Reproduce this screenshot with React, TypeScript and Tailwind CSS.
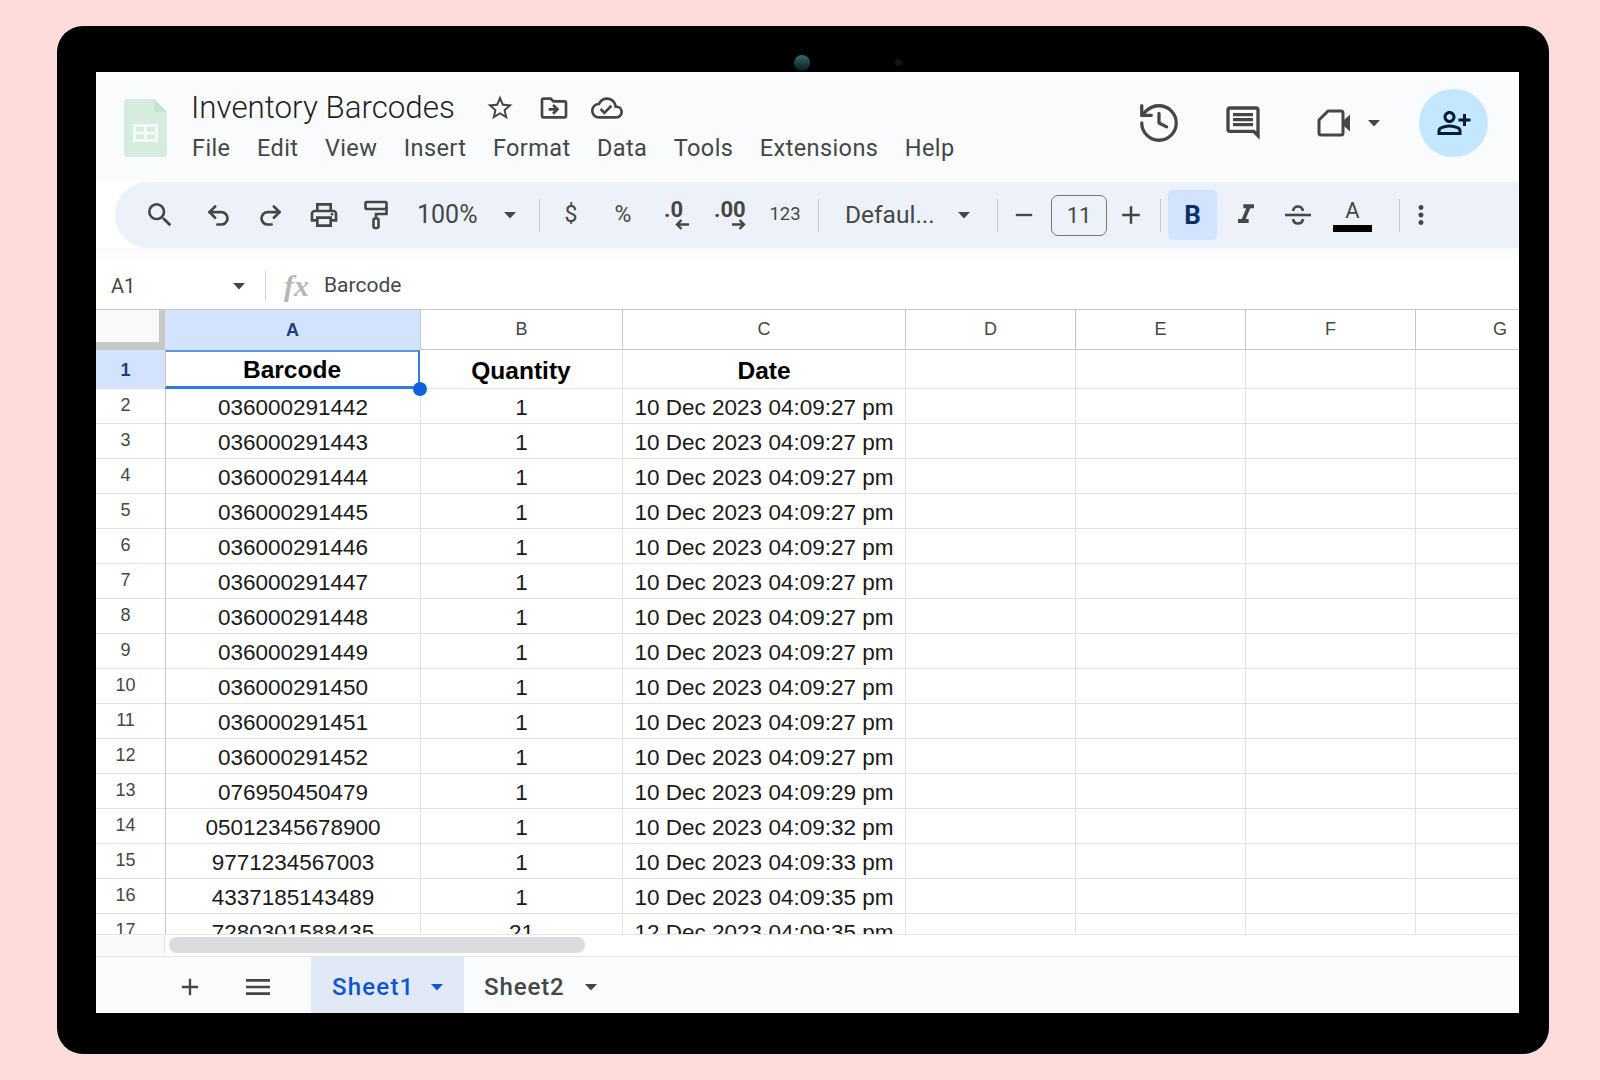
import React from 'react';
import {
  MdSearch, MdOutlinePrint, MdOutlineStarBorder, MdOutlineDriveFileMove,
  MdOutlineCloudDone, MdOutlineInsertComment, MdOutlinePersonAddAlt,
  MdAdd, MdRemove, MdMenu, MdMoreVert, MdFormatItalic,
} from 'react-icons/md';
import { Undo2, Redo2, History } from 'lucide-react';

const menus = ['File', 'Edit', 'View', 'Insert', 'Format', 'Data', 'Tools', 'Extensions', 'Help'];

const rows = [
  ['036000291442', '1', '10 Dec 2023 04:09:27 pm'],
  ['036000291443', '1', '10 Dec 2023 04:09:27 pm'],
  ['036000291444', '1', '10 Dec 2023 04:09:27 pm'],
  ['036000291445', '1', '10 Dec 2023 04:09:27 pm'],
  ['036000291446', '1', '10 Dec 2023 04:09:27 pm'],
  ['036000291447', '1', '10 Dec 2023 04:09:27 pm'],
  ['036000291448', '1', '10 Dec 2023 04:09:27 pm'],
  ['036000291449', '1', '10 Dec 2023 04:09:27 pm'],
  ['036000291450', '1', '10 Dec 2023 04:09:27 pm'],
  ['036000291451', '1', '10 Dec 2023 04:09:27 pm'],
  ['036000291452', '1', '10 Dec 2023 04:09:27 pm'],
  ['076950450479', '1', '10 Dec 2023 04:09:29 pm'],
  ['05012345678900', '1', '10 Dec 2023 04:09:32 pm'],
  ['9771234567003', '1', '10 Dec 2023 04:09:33 pm'],
  ['4337185143489', '1', '10 Dec 2023 04:09:35 pm'],
  ['7280301588435', '21', '12 Dec 2023 04:09:35 pm'],
];

const GRID = 'grid grid-cols-[69px_255px_202px_283px_170px_170px_170px_104px]';

const Caret = ({ className = 'text-[#444746]' }: { className?: string }) => (
  <svg width="14" height="8" viewBox="0 0 14 8" className={`fill-current ${className}`}>
    <path d="M1 1h12L7 7.5z" />
  </svg>
);

const Sep = ({ className = '' }: { className?: string }) => (
  <div className={`h-[33px] w-px bg-[#c7c9cc] ${className}`} />
);

const SheetsLogo = () => (
  <svg width="43" height="58" viewBox="0 0 43 58">
    <path d="M4 0h26l13 13v41a4 4 0 0 1-4 4H4a4 4 0 0 1-4-4V4a4 4 0 0 1 4-4z" fill="#d5ecdf" />
    <path d="M30 0l13 13H33a3 3 0 0 1-3-3z" fill="#c3e3d1" />
    <path d="M9 25h25v18H9z M12 28v4.500h8V28z M23 28v4.500h8V28z M12 35.500V40h8v-4.500z M23 35.500V40h8v-4.500z" fill="#f4fbf7" fillRule="evenodd" />
  </svg>
);

const PaintIcon = () => (
  <svg width="26" height="30" viewBox="0 0 26 30" fill="none" stroke="#444746" strokeWidth="2.600">
    <rect x="2.500" y="2" width="21" height="7" rx="1" />
    <path d="M23.500 6.500v7.500H13v4.500" />
    <rect x="10.500" y="18.500" width="5" height="9.500" rx="1.500" />
  </svg>
);

const VideoIcon = () => (
  <svg width="36" height="30" viewBox="0 0 36 30" fill="none" stroke="#444746" strokeWidth="3">
    <path d="M12 3h13a2 2 0 0 1 2 2v20a2 2 0 0 1-2 2H5a2 2 0 0 1-2-2V12z" strokeLinejoin="round" />
    <path d="M28 12l6-5.500v17L28 18z" fill="#444746" stroke="none" />
  </svg>
);

const StrikeIcon = () => (
  <svg width="30" height="24" viewBox="0 0 30 24" fill="none" stroke="#444746" strokeWidth="2.600">
    <path d="M2 12h26" />
    <path d="M10 8c.5-3 2.500-4.500 5-4.500s4.500 1.500 5 4.500" />
    <path d="M10 16c.5 3 2.500 4.500 5 4.500s4.500-1.500 5-4.500" />
  </svg>
);

const ArrowMark = ({ flip = false }: { flip?: boolean }) => (
  <svg width="15" height="11" viewBox="0 0 15 11" fill="none" stroke="#444746" strokeWidth="2.400" className={flip ? 'rotate-180' : ''}>
    <path d="M14 5.500H2 M6.500 1L2 5.500 6.500 10" />
  </svg>
);

const App: React.FC = () => {
  return (
    <div className="h-[1080px] bg-[#fedcdc] pl-[57px] pt-[26px] font-['Roboto',sans-serif]">
      {/* Tablet frame */}
      <div className="relative h-[1028px] w-[1492px] rounded-[26px] bg-black pl-[39px] pt-[46px]">
        <div className="absolute left-[737px] top-[29px] h-4 w-4 rounded-full bg-gradient-to-b from-[#2f6f6b] to-[#0c1a1c]" />
        <div className="absolute left-[838px] top-[33px] h-[7px] w-[7px] rounded-full bg-[#101414]" />

        <div className="flex h-[941px] w-[1423px] flex-col overflow-hidden bg-white">
          {/* Title bar */}
          <div className="flex h-[110px] shrink-0 bg-[#f9fbfd]">
            <div className="ml-[28px] mt-[27px]"><SheetsLogo /></div>
            <div className="ml-[24px] mt-[15px]">
              <div className="flex h-[42px] items-center">
                <span className="w-[280px] text-[31.300px] font-light text-[#1f1f1f]">Inventory Barcodes</span>
                <MdOutlineStarBorder size={30} className="ml-[14px] text-[#444746]" />
                <MdOutlineDriveFileMove size={32} className="ml-[23px] text-[#444746]" />
                <MdOutlineCloudDone size={32} className="ml-[21px] text-[#444746]" />
              </div>
              <div className="ml-[1px] mt-[2px] flex h-[36px] items-center gap-[26.500px] text-[23.500px] tracking-[0.4px] text-[#444746]">
                {menus.map((m) => (
                  <span key={m}>{m}</span>
                ))}
              </div>
            </div>
            <div className="ml-auto mr-[31px] mt-[17px] flex h-[68px] items-center">
              <History size={46} strokeWidth={1.700} className="text-[#444746]" />
              <MdOutlineInsertComment size={40} className="ml-[41px] text-[#444746]" />
              <div className="ml-[53px]"><VideoIcon /></div>
              <Caret className="ml-[15px] text-[#444746]" />
              <div className="ml-[38px] flex h-[68px] w-[69px] items-center justify-center rounded-full bg-[#c2e7ff]">
                <MdOutlinePersonAddAlt size={36} className="text-[#001d35]" />
              </div>
            </div>
          </div>

          {/* Toolbar */}
          <div className="ml-[19px] flex h-[66px] shrink-0 items-center rounded-l-[33px] bg-[#edf2fa] pl-[19px] text-[#444746]">
            <div className="flex w-[52px] justify-center"><MdSearch size={32} /></div>
            <div className="ml-[6px] flex w-[52px] justify-center"><Undo2 size={27} strokeWidth={2.400} /></div>
            <div className="flex w-[52px] justify-center"><Redo2 size={27} strokeWidth={2.400} /></div>
            <div className="ml-[2px] flex w-[52px] justify-center"><MdOutlinePrint size={32} /></div>
            <div className="flex w-[52px] justify-center"><PaintIcon /></div>
            <span className="ml-[15px] w-[64px] text-[25px]">100%</span>
            <Caret className="ml-[22px] text-[#444746]" />
            <Sep className="ml-[22px]" />
            <span className="ml-[24px] w-[14px] text-center text-[23px]">$</span>
            <span className="ml-[34px] w-[22px] text-center text-[23px]">%</span>
            <div className="ml-[30px] flex w-[26px] flex-col items-end text-[#444746]">
              <span className="self-start text-[22px] font-bold leading-[18px]">.0</span>
              <ArrowMark />
            </div>
            <div className="ml-[24px] flex w-[32px] flex-col items-end">
              <span className="self-start text-[22px] font-bold leading-[18px]">.00</span>
              <ArrowMark flip />
            </div>
            <span className="ml-[22px] w-[34px] text-center text-[18.500px]">123</span>
            <Sep className="ml-[16px]" />
            <span className="ml-[26px] w-[92px] whitespace-nowrap text-[24.500px]">Defaul...</span>
            <Caret className="ml-[20px] text-[#444746]" />
            <Sep className="ml-[26px]" />
            <MdRemove size={28} className="ml-[12px]" />
            <div className="ml-[13px] flex h-[41px] w-[56px] items-center justify-center rounded-[7px] border border-[#747775] text-[22px]">11</div>
            <MdAdd size={30} className="ml-[9px]" />
            <Sep className="ml-[14px]" />
            <div className="ml-[7px] flex h-[50px] w-[49px] items-center justify-center rounded-[5px] bg-[#d3e3fd] text-[26px] font-bold text-[#0b2f6b]">B</div>
            <MdFormatItalic size={32} className="ml-[13px]" />
            <div className="ml-[21px]"><StrikeIcon /></div>
            <div className="ml-[20px] flex w-[39px] flex-col items-center">
              <span className="text-[22px] leading-[24px]">A</span>
              <div className="mt-[2px] h-[7px] w-[39px] bg-black" />
            </div>
            <Sep className="ml-[27px]" />
            <MdMoreVert size={30} className="ml-[6px]" />
          </div>

          <div className="h-[14px] shrink-0 bg-gradient-to-b from-[#f7f9fc] to-white" />

          {/* Formula bar */}
          <div className="flex h-[48px] shrink-0 items-center border-b border-[#c4c7c5] text-[#444746]">
            <span className="ml-[15px] w-[121px] text-[20px]">A1</span>
            <Caret className="text-[#444746]" />
            <div className="ml-[19px] h-[30px] w-px bg-[#d0d2d3]" />
            <span className="ml-[18px] font-['Liberation_Serif',serif] text-[30px] font-bold italic leading-none text-[#b4b6b8]">fx</span>
            <span className="ml-[15px] text-[21px]">Barcode</span>
          </div>

          {/* Grid */}
          <div className="h-[624px] shrink-0 overflow-hidden font-['Liberation_Sans',sans-serif]">
            <div className={`${GRID} h-[40px] text-[18px] text-[#444746]`}>
              <div className="border-b-[8px] border-r-[6px] border-[#c7c7c7] bg-[#f8f9fa]" />
              <div className="flex items-center justify-center bg-[#d3e3fd] font-bold text-[#1f3f78]">A</div>
              {['B', 'C', 'D', 'E', 'F'].map((c) => (
                <div key={c} className="flex items-center justify-center border-b border-l border-[#c4c7c5]">{c}</div>
              ))}
              <div className="flex items-center justify-end border-b border-l border-[#c4c7c5] pr-[12px]">G</div>
            </div>

            <div className={`${GRID} h-[39px] grid-rows-[39px] border-b border-[#e1e3e1] text-[24.500px] font-bold leading-none text-black`}>
              <div className="flex items-center justify-center bg-[#d3e3fd] pr-[10px] text-[18px] text-[#1f3f78]">1</div>
              <div className="relative flex items-center justify-center border-b-[3px] border-l border-r-[2px] border-t-[2px] border-b-[#2f7de1] border-l-[#c4c7c5] border-r-[#2f7de1] border-t-[#5b95de] pt-[3px]">
                Barcode
                <div className="absolute bottom-[-10px] right-[-9px] z-10 h-[14px] w-[14px] rounded-full bg-[#1160dc]" />
              </div>
              <div className="flex items-center justify-center pt-[3px]">Quantity</div>
              <div className="flex items-center justify-center border-l border-[#e1e3e1] pt-[3px]">Date</div>
              <div className="border-l border-[#e1e3e1]" />
              <div className="border-l border-[#e1e3e1]" />
              <div className="border-l border-[#e1e3e1]" />
              <div className="border-l border-[#e1e3e1]" />
            </div>

            {rows.map((r, i) => (
              <div key={i} className={`${GRID} h-[35px] border-b border-[#e1e3e1] text-[22.500px] text-[#1a1a1a]`}>
                <div className="flex justify-center pr-[10px] pt-[3px] text-[18px] text-[#444746]">{i + 2}</div>
                <div className="flex justify-center border-l border-[#c4c7c5] pt-[2px]">{r[0]}</div>
                <div className="flex justify-center border-l border-[#e1e3e1] pt-[2px]">{r[1]}</div>
                <div className="flex justify-center whitespace-nowrap border-l border-[#e1e3e1] pt-[2px]">{r[2]}</div>
                <div className="border-l border-[#e1e3e1]" />
                <div className="border-l border-[#e1e3e1]" />
                <div className="border-l border-[#e1e3e1]" />
                <div className="border-l border-[#e1e3e1]" />
              </div>
            ))}
          </div>

          {/* Horizontal scrollbar */}
          <div className="flex h-[23px] shrink-0 items-center border-y border-[#e3e5e6] pb-[2px]">
            <div className="h-full w-[69px] border-r border-[#e1e3e1] bg-[#f8f9fa]" />
            <div className="ml-[4px] h-[16px] w-[416px] rounded-full bg-[#dadce0]" />
          </div>

          {/* Sheet tabs */}
          <div className="flex h-[56px] shrink-0 items-center bg-[#f9fbfd] text-[#444746]">
            <MdAdd size={28} className="ml-[80px] mt-[4px]" />
            <MdMenu size={32} className="ml-[38px] mt-[4px]" />
            <div className="ml-[37px] flex h-full w-[153px] items-center bg-[#e1e9f7] pl-[21px] pt-[4px] text-[24px] font-medium tracking-[1.2px] text-[#0b57d0]">
              Sheet1
              <Caret className="ml-[16px] text-[#0b57d0]" />
            </div>
            <span className="ml-[20px] mt-[4px] text-[24px] font-medium tracking-[0.9px]">Sheet2</span>
            <Caret className="ml-[19px] mt-[4px] text-[#444746]" />
          </div>
        </div>
      </div>
    </div>
  );
};

export default App;
